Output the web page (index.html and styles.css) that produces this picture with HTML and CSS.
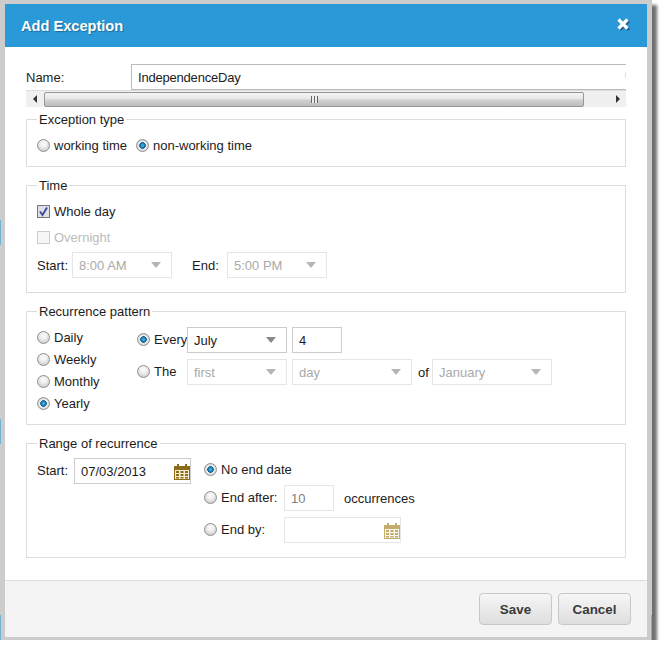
FILE: index.html
```html
<!DOCTYPE html>
<html lang="en">

<head>
    <meta charset="UTF-8">
    <title>Add Exception</title>
    <link rel="stylesheet" href="styles.css">
</head>

<body>
    <div class="dialog">
        <div class="dialog-header">
            <span class="dialog-title">Add Exception</span>
            <svg class="close-icon" width="15" height="15" viewBox="0 0 15 15">
                <path d="M3 3 L12 12 M12 3 L3 12" stroke="#1d5f8a" stroke-width="3.4" transform="translate(.8 .8)" />
                <path d="M2.5 2.5 L11.5 11.5 M11.5 2.5 L2.5 11.5" stroke="#fff" stroke-width="3.2" />
            </svg>
        </div>

        <div class="dialog-body">
            <div class="name-row">
                <span class="name-label">Name:</span>
                <div class="name-input">
                    <span class="name-value">IndependenceDay</span>
                    <span class="clipped">(</span>
                </div>
            </div>
            <div class="scrollbar">
                <span class="scroll-btn"><i class="arrow-left"></i></span>
                <div class="scroll-thumb"><span class="grip"></span></div>
                <span class="scroll-rest"><i class="arrow-right"></i></span>
            </div>

            <fieldset class="group group-type">
                <legend>Exception type</legend>
                <div class="row">
                    <span class="radio"></span><span class="opt">working time</span>
                    <span class="radio on gap-left"></span><span class="opt">non-working time</span>
                </div>
            </fieldset>

            <fieldset class="group group-time">
                <legend>Time</legend>
                <div class="row">
                    <span class="check on">
                        <svg width="11" height="11" viewBox="0 0 11 11">
                            <path d="M2 5.5 L4.5 9 L9 1.5" fill="none" stroke="#3c4f9c" stroke-width="2" />
                        </svg>
                    </span>
                    <span class="opt">Whole day</span>
                </div>
                <div class="row row-overnight">
                    <span class="check"></span><span class="opt muted">Overnight</span>
                </div>
                <div class="row row-hours">
                    <span class="label-start">Start:</span>
                    <div class="select off w100"><span>8:00 AM</span><i></i></div>
                    <span class="label-end">End:</span>
                    <div class="select off w100"><span>5:00 PM</span><i></i></div>
                </div>
            </fieldset>

            <fieldset class="group group-pattern">
                <legend>Recurrence pattern</legend>
                <div class="pattern">
                    <div class="pattern-kinds">
                        <div class="row"><span class="radio"></span><span class="opt">Daily</span></div>
                        <div class="row"><span class="radio"></span><span class="opt">Weekly</span></div>
                        <div class="row"><span class="radio"></span><span class="opt">Monthly</span></div>
                        <div class="row"><span class="radio on"></span><span class="opt">Yearly</span></div>
                    </div>
                    <div class="pattern-rules">
                        <div class="rule">
                            <div class="rule-label"><span class="radio on"></span><span class="opt">Every</span></div>
                            <div class="select w100"><span>July</span><i></i></div>
                            <div class="field w50">4</div>
                        </div>
                        <div class="rule">
                            <div class="rule-label"><span class="radio"></span><span class="opt">The</span></div>
                            <div class="select off w100"><span>first</span><i></i></div>
                            <div class="select off w120"><span>day</span><i></i></div>
                            <span class="of">of</span>
                            <div class="select off w120"><span>January</span><i></i></div>
                        </div>
                    </div>
                </div>
            </fieldset>

            <fieldset class="group group-range">
                <legend>Range of recurrence</legend>
                <div class="range">
                    <span class="range-label">Start:</span>
                    <div class="field date w117">
                        <span>07/03/2013</span>
                        <svg class="cal" width="16" height="17" viewBox="0 0 16 17">
                            <path d="M0 3H3V1H5V3H11V1H13V3H16V17H0Z" fill="#8c6d17" />
                            <path d="M1 7H15V16H1Z" fill="#f3ecd6" />
                            <path d="M2 8H5V10H2ZM6.5 8H9.5V10H6.5ZM11 8H14V10H11ZM2 11H5V13H2ZM6.5 11H9.5V13H6.5ZM11 11H14V13H11ZM2 14H5V15.5H2ZM6.5 14H9.5V15.5H6.5ZM11 14H14V15.5H11Z" fill="#8c6d17" />
                        </svg>
                    </div>
                    <div class="range-ends">
                        <div class="end-row first"><span class="radio on"></span><span class="opt">No end date</span></div>
                        <div class="end-row">
                            <div class="end-label"><span class="radio"></span><span class="opt">End after:</span></div>
                            <div class="field off w50">10</div>
                            <span class="occ">occurrences</span>
                        </div>
                        <div class="end-row">
                            <div class="end-label"><span class="radio"></span><span class="opt">End by:</span></div>
                            <div class="field off date w117">
                                <svg class="cal" width="16" height="17" viewBox="0 0 16 17">
                                    <path d="M0 3H3V1H5V3H11V1H13V3H16V17H0Z" fill="#c4ac6c" />
                                    <path d="M1 7H15V16H1Z" fill="#f9f5ea" />
                                    <path d="M2 8H5V10H2ZM6.5 8H9.5V10H6.5ZM11 8H14V10H11ZM2 11H5V13H2ZM6.5 11H9.5V13H6.5ZM11 11H14V13H11ZM2 14H5V15.5H2ZM6.5 14H9.5V15.5H6.5ZM11 14H14V15.5H11Z" fill="#c4ac6c" />
                                </svg>
                            </div>
                        </div>
                    </div>
                </div>
            </fieldset>
        </div>

        <div class="dialog-footer">
            <button class="btn">Save</button>
            <button class="btn">Cancel</button>
        </div>
    </div>

    <!-- bits of the page behind the dialog, showing at its edge -->
    <span class="edge edge-a"></span>
    <span class="edge edge-b"></span>
    <span class="edge edge-c"></span>
    <span class="edge edge-d"></span>
</body>

</html>
```

FILE: styles.css
```css
html,
body {
    margin: 0;
    padding: 0;
    background: #fff;
}

body {
    font-family: "Liberation Sans", Arial, sans-serif;
    font-size: 13px;
    color: #1c1c1c;
    overflow: hidden;
}

.dialog {
    box-sizing: border-box;
    width: 652px;
    height: 640px;
    border-style: solid;
    border-color: #cccccc;
    border-width: 4px 5px 3px 5px;
    background: #fff;
    box-shadow: 5px 5px 3px #707070;
    display: flex;
    flex-direction: column;
}

.edge {
    position: absolute;
    width: 1px;
    background: #6fb3d6;
}

.edge-a {
    left: 0;
    top: 220px;
    height: 25px;
}

.edge-b {
    left: 0;
    top: 419px;
    height: 25px;
}

.edge-c {
    left: 0;
    top: 615px;
    height: 25px;
}

.edge-d {
    left: 651px;
    top: 615px;
    height: 25px;
}

.dialog-header {
    height: 43px;
    flex: none;
    background-color: #2999d8;
    display: flex;
    align-items: center;
    justify-content: space-between;
    padding: 0 16px 0 16px;
}

.dialog-title {
    color: #fff;
    font-size: 14.6px;
    font-weight: bold;
    text-shadow: 1px 1px 1px #1d6a99;
}

.close-icon {
    margin-top: -3px;
}

.dialog-body {
    flex: 1;
    padding: 17px 21px 0 21px;
}

.name-row {
    display: flex;
    height: 26px;
    align-items: center;
}

.name-label {
    width: 105px;
}

.name-input {
    flex: 1;
    box-sizing: border-box;
    height: 26px;
    border: 1px solid #bbb;
    border-right: none;
    padding-left: 6px;
    display: flex;
    align-items: center;
    justify-content: space-between;
    overflow: hidden;
}

.name-value {
    letter-spacing: -0.2px;
}

.clipped {
    color: #999;
    margin-right: -3px;
    margin-top: -8px;
}

.scrollbar {
    height: 17px;
    box-sizing: border-box;
    background: #f0f0f0;
    border-top: 1px solid #ddd;
    display: flex;
    margin-bottom: 5px;
}

.scroll-btn {
    width: 18px;
    display: flex;
    align-items: center;
    justify-content: center;
}

.scroll-thumb {
    width: 540px;
    box-sizing: border-box;
    height: 15px;
    margin-top: 1px;
    border: 1px solid #979797;
    border-radius: 2px;
    background: linear-gradient(#f4f4f4 0%, #e6e6e6 45%, #d0d0d0 55%, #bdbdbd 100%);
    display: flex;
    align-items: center;
    justify-content: center;
}

.grip {
    width: 7px;
    height: 7px;
    background: repeating-linear-gradient(90deg, #666 0 1px, #eee 1px 3px);
}

.scroll-rest {
    flex: 1;
    display: flex;
    align-items: center;
    justify-content: flex-end;
    padding-right: 6px;
}

.arrow-left,
.arrow-right {
    width: 0;
    height: 0;
    border-top: 4px solid transparent;
    border-bottom: 4px solid transparent;
}

.arrow-left {
    border-right: 4px solid #333;
}

.arrow-right {
    border-left: 4px solid #333;
}

.group {
    margin: 0 0 11px 0;
    padding: 0 10px;
    border: 1px solid #ddd;
    min-width: 0;
}

.group legend {
    padding: 0 2px;
    line-height: 15px;
}

.group-type {
    padding-top: 9px;
    padding-bottom: 12px;
}

.group-time {
    padding-top: 9px;
    padding-bottom: 14px;
}

.group-pattern {
    padding-top: 9px;
    padding-bottom: 12px;
}

.group-range {
    padding-top: 7px;
    padding-bottom: 14px;
    margin-bottom: 0;
}

.row {
    display: flex;
    align-items: center;
    height: 18px;
}

.opt {
    margin-left: 4px;
}

.muted {
    color: #bbb;
}

.gap-left {
    margin-left: 9px;
}

.radio {
    box-sizing: border-box;
    flex: none;
    width: 13px;
    height: 13px;
    border-radius: 50%;
    border: 1px solid #8f8f8f;
    background: radial-gradient(circle at 50% 35%, #f6f6f6 0 25%, #cfcfcf 80%);
}

.radio.on {
    background: radial-gradient(circle at 50% 50%, #37a7dc 0 14%, #0a5588 38%, #eeeeee 46%, #d8d8d8 70%, #b8b8b8 100%);
}

.check {
    box-sizing: border-box;
    flex: none;
    width: 13px;
    height: 13px;
    border: 1px solid #ccc;
    background: #f6f6f6;
    display: flex;
}

.check.on {
    border-color: #777;
    background: #dfe0e8;
}

.row-overnight {
    margin-top: 8px;
}

.row-hours {
    height: 26px;
    margin-top: 6px;
}

.label-start {
    width: 35px;
}

.label-end {
    margin: 0 10px 0 20px;
    width: 25px;
}

.select,
.field {
    box-sizing: border-box;
    flex: none;
    height: 26px;
    border: 1px solid #ccc;
    padding: 0 6px;
    display: flex;
    align-items: center;
    background: #fff;
}

.select {
    justify-content: space-between;
    padding-right: 10px;
}

.select i {
    width: 0;
    height: 0;
    border-left: 5px solid transparent;
    border-right: 5px solid transparent;
    border-top: 6px solid #888;
}

.select.off,
.field.off {
    border-color: #e6e6e6;
    color: #aaa;
}

.field.off {
    color: #808080;
}

.select.off i {
    border-top-color: #b5b5b5;
}

.w50 {
    width: 50px;
}

.w100 {
    width: 100px;
}

.w117 {
    width: 117px;
}

.w120 {
    width: 120px;
}

.pattern {
    display: flex;
    align-items: flex-start;
}

.pattern-kinds {
    width: 100px;
    flex: none;
    display: flex;
    flex-direction: column;
    gap: 4px;
}

.pattern-rules {
    display: flex;
    flex-direction: column;
    gap: 6px;
    margin-top: -1px;
}

.rule {
    display: flex;
    align-items: center;
    gap: 5px;
}

.rule-label {
    width: 45px;
    margin-bottom: 2px;
    display: flex;
    align-items: center;
}

.of {
    width: 9px;
    margin-left: 1px;
}

.range {
    display: flex;
    align-items: flex-start;
}

.range-label {
    width: 37px;
    line-height: 26px;
}

.date {
    justify-content: space-between;
    padding-right: 0;
}

.date .cal {
    margin-left: auto;
}

.range-ends {
    margin-left: 13px;
    display: flex;
    flex-direction: column;
    gap: 6px;
}

.end-row {
    display: flex;
    align-items: center;
}

.end-row.first {
    height: 22px;
    margin-bottom: -1px;
}

.end-label {
    width: 80px;
    margin-bottom: 2px;
    display: flex;
    align-items: center;
}

.occ {
    margin-left: 10px;
}

.dialog-footer {
    flex: none;
    box-sizing: border-box;
    height: 57px;
    border-top: 1px solid #ddd;
    background-color: #f4f4f4;
    padding: 12px 16px 0 0;
    display: flex;
    justify-content: flex-end;
    gap: 6px;
}

.btn {
    width: 73px;
    height: 32px;
    border: 1px solid #c8c8c8;
    border-radius: 4px;
    background: linear-gradient(#f6f6f6, #dedede);
    font-family: inherit;
    font-size: 13.4px;
    font-weight: bold;
    color: #3a3a3a;
    cursor: pointer;
}
```
